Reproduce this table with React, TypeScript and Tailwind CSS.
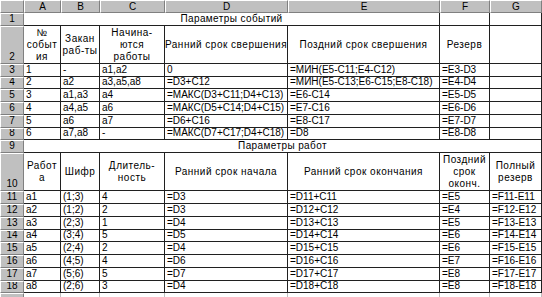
import React from "react";

const colLetters = ["A", "B", "C", "D", "E", "F", "G"];

const events = [
  ["1", "-", "а1,а2", "0", "=МИН(E5-C11;E4-C12)", "=E3-D3", ""],
  ["2", "а2", "а3,а5,а8", "=D3+C12", "=МИН(E5-C13;E6-C15;E8-C18)", "=E4-D4", ""],
  ["3", "а1,а3", "а4", "=МАКС(D3+C11;D4+C13)", "=E6-C14", "=E5-D5", ""],
  ["4", "а4,а5", "а6", "=МАКС(D5+C14;D4+C15)", "=E7-C16", "=E6-D6", ""],
  ["5", "а6", "а7", "=D6+C16", "=E8-C17", "=E7-D7", ""],
  ["6", "а7,а8", "-", "=МАКС(D7+C17;D4+C18)", "=D8", "=E8-D8", ""],
];

const works = [
  ["а1", "(1;3)", "4", "=D3", "=D11+C11", "=E5", "=F11-E11"],
  ["а2", "(1;2)", "2", "=D3", "=D12+C12", "=E4", "=F12-E12"],
  ["а3", "(2;3)", "1", "=D4", "=D13+C13", "=E5", "=F13-E13"],
  ["а4", "(3;4)", "5", "=D5", "=D14+C14", "=E6", "=F14-E14"],
  ["а5", "(2;4)", "2", "=D4", "=D15+C15", "=E6", "=F15-E15"],
  ["а6", "(4;5)", "4", "=D6", "=D16+C16", "=E7", "=F16-E16"],
  ["а7", "(5;6)", "5", "=D7", "=D17+C17", "=E8", "=F17-E17"],
  ["а8", "(2;6)", "3", "=D4", "=D18+C18", "=E8", "=F18-E18"],
];

function Head({ children, className = "" }: { children?: React.ReactNode; className?: string }) {
  return (
    <div
      className={`flex justify-center bg-[#c0c0c0] border-t border-l border-t-white border-l-white border-r border-b border-r-[#808080] border-b-[#808080] overflow-hidden ${className}`}
    >
      {children}
    </div>
  );
}

function Cell({ children, className = "" }: { children?: React.ReactNode; className?: string }) {
  return (
    <div className={`border-r border-b border-[#202020] px-[2px] whitespace-nowrap overflow-hidden flex ${className}`}>
      {children}
    </div>
  );
}

// wrapped, centred header cell (rows 2 and 10)
function Wrap({ children }: { children: React.ReactNode }) {
  return <Cell className="items-center justify-center text-center leading-[12px] tracking-[0.5px]">{children}</Cell>;
}

export default function App() {
  return (
    <div
      className="w-[542px] h-[297px] overflow-hidden bg-white text-black text-[10px]"
      style={{ fontFamily: '"Liberation Sans", Arial, sans-serif' }}
    >
      <div className="grid grid-cols-[24px_37px_39px_65px_123px_152px_50px_52px] grid-rows-[13px_13px_38px_13px_12px_13px_13px_13px_12px_13px_38px_13px_13px_13px_12px_13px_13px_13px_12px_20px]">
        {/* column headers */}
        <Head />
        {colLetters.map((c) => (
          <Head key={c} className="items-center leading-none">{c}</Head>
        ))}

        {/* row 1 */}
        <Head className="items-end leading-[12px]">1</Head>
        <Cell className="col-span-5 justify-center items-end leading-[12px] tracking-[0.4px]">Параметры событий</Cell>
        <Cell />
        <Cell />

        {/* row 2 */}
        <Head className="items-end leading-[12px]">2</Head>
        <Wrap>№<br />событ<br />ия</Wrap>
        <Wrap>Закан<br />раб-ты</Wrap>
        <Wrap>Начина-<br />ются<br />работы</Wrap>
        <Wrap>Ранний срок свершения</Wrap>
        <Wrap>Поздний срок свершения</Wrap>
        <Wrap>Резерв</Wrap>
        <Cell />

        {events.map((row, i) => (
          <React.Fragment key={i}>
            <Head className="items-end leading-[12px]">{i + 3}</Head>
            {row.map((v, j) => (
              <Cell key={j} className="items-end leading-[12px]">{v}</Cell>
            ))}
          </React.Fragment>
        ))}

        {/* row 9 */}
        <Head className="items-end leading-[12px]">9</Head>
        <Cell className="col-span-7 justify-center items-end leading-[12px] tracking-[0.4px]">Параметры работ</Cell>

        {/* row 10 */}
        <Head className="items-end leading-[12px]">10</Head>
        <Wrap>Работ<br />а</Wrap>
        <Wrap>Шифр</Wrap>
        <Wrap>Длитель-<br />ность</Wrap>
        <Wrap>Ранний срок начала</Wrap>
        <Wrap>Ранний срок окончания</Wrap>
        <Wrap>Поздний<br />срок<br />оконч.</Wrap>
        <Wrap>Полный<br />резерв</Wrap>

        {works.map((row, i) => (
          <React.Fragment key={i}>
            <Head className="items-end leading-[12px]">{i + 11}</Head>
            {row.map((v, j) => (
              <Cell key={j} className="items-end leading-[12px]">{v}</Cell>
            ))}
          </React.Fragment>
        ))}

        {/* row 19, only its top edge shows */}
        <Head />
        {colLetters.map((c) => (
          <div key={c} className="border-r border-[#c0c0c0]" />
        ))}
      </div>
    </div>
  );
}
